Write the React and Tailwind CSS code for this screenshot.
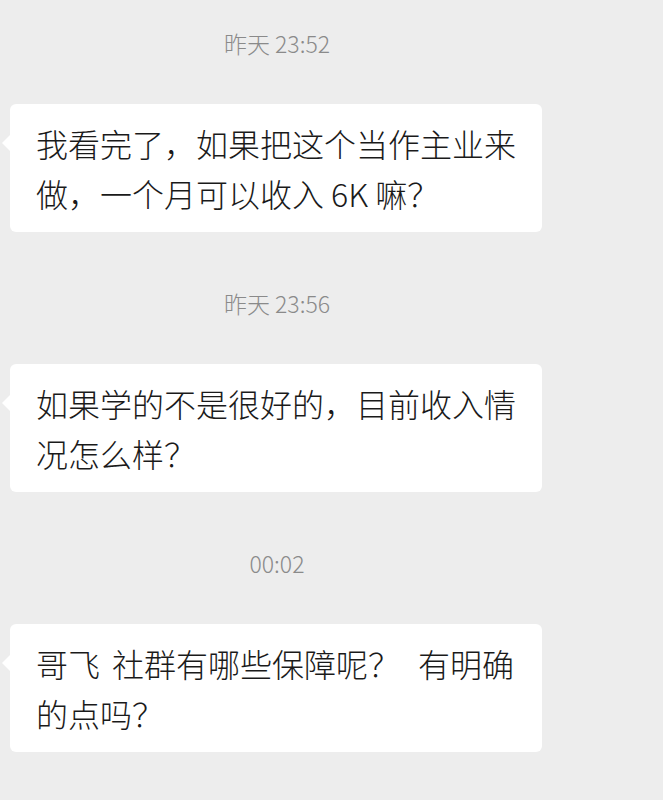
export default function App() {
  const msgs = [
    { ts: "昨天 23:52", text: "我看完了，如果把这个当作主业来做，一个月可以收入 6K 嘛？", ws: "" },
    { ts: "昨天 23:56", text: "如果学的不是很好的，目前收入情况怎么样？", ws: "" },
    { ts: "00:02", text: "哥飞 社群有哪些保障呢？\u2002\u200a有明确的点吗？", ws: "[word-spacing:5px]" },
  ];
  return (
    <div
      className="w-[663px] h-[800px] bg-[#ededed] overflow-hidden pt-[28px]"
      style={{ fontFamily: '"Noto Sans CJK SC", "Noto Sans", sans-serif' }}
    >
      {msgs.map((m, i) => (
        <div key={i} className="flex flex-col mb-[56px]">
          <div className="w-[554px] text-center text-[23px] leading-[30px] text-[#8a8a8a] font-light">
            {m.ts}
          </div>
          <div
            className={
              i === 2
                ? "relative ml-[10px] mt-[46px] w-[532px] bg-white rounded-[6px] px-[26px] py-[14px] text-[32px] leading-[50px] text-[#1a1a1a] font-light [word-spacing:5px]"
                : "relative ml-[10px] mt-[46px] w-[532px] bg-white rounded-[6px] px-[26px] py-[14px] text-[32px] leading-[50px] text-[#1a1a1a] font-light"
            }
          >
            <div className="absolute left-[-8px] top-[31px] w-0 h-0 border-y-[8px] border-r-[8px] border-y-transparent border-r-white" />
            {m.text}
          </div>
        </div>
      ))}
    </div>
  );
}
